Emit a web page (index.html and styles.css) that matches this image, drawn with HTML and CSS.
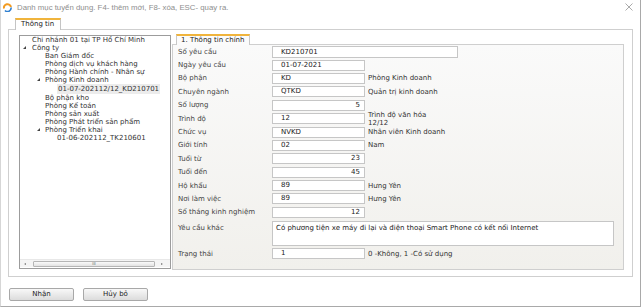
FILE: index.html
```html
<!DOCTYPE html>
<html lang="vi">
<head>
<meta charset="utf-8">
<title>Danh mục tuyển dụng</title>
<link rel="stylesheet" href="styles.css">
</head>
<body>
<div class="window">
  <div class="titlebar">
    <svg class="app-icon" width="9" height="9" viewBox="0 0 9 9">
      <path d="M1 5.5 A3.5 3.5 0 0 1 8 4" fill="none" stroke="#f29a1f" stroke-width="2"/>
      <path d="M8 4.5 A3.5 3.5 0 0 1 2 7.5" fill="none" stroke="#2f7fd0" stroke-width="1.6"/>
    </svg>
    <span class="title">Danh mục tuyển dụng. F4- thêm mới, F8- xóa, ESC- quay ra.</span>
    <svg class="close" width="8" height="8" viewBox="0 0 8 8">
      <path d="M0.5 0.5 L7.5 7.5 M7.5 0.5 L0.5 7.5" stroke="#a0a0a0" stroke-width="0.9"/>
    </svg>
  </div>
  <div class="content">
    <div class="tabs"><div class="tab">Thông tin</div></div>
    <div class="panel">
      <div class="tree">
        <ul class="tree-list">
          <li class="node l0">Chi nhánh 01 tại TP Hồ Chí Minh</li>
          <li class="node l0 open"><span class="arrow"></span>Công ty</li>
          <li class="node l1">Ban Giám đốc</li>
          <li class="node l1">Phòng dịch vụ khách hàng</li>
          <li class="node l1">Phòng Hành chính - Nhân sự</li>
          <li class="node l1 open"><span class="arrow"></span>Phòng Kinh doanh</li>
          <li class="node l2 selected"><span class="sel">01-07-202112/12_KD210701</span></li>
          <li class="node l1">Bộ phận kho</li>
          <li class="node l1">Phòng Kế toán</li>
          <li class="node l1">Phòng sản xuất</li>
          <li class="node l1">Phòng Phát triển sản phẩm</li>
          <li class="node l1 open"><span class="arrow"></span>Phòng Triển khai</li>
          <li class="node l2">01-06-202112_TK210601</li>
        </ul>
        <div class="hscroll">
          <span class="sarrow left"></span>
          <div class="thumb"><span class="grip">III</span></div>
          <span class="sarrow right"></span>
        </div>
      </div>
      <div class="form-area">
        <div class="subtabs"><div class="subtab">1. Thông tin chính</div></div>
        <div class="form">
          <div class="row"><span class="label">Số yêu cầu</span><span class="field wide">KD210701</span></div>
          <div class="row"><span class="label">Ngày yêu cầu</span><span class="field">01-07-2021</span></div>
          <div class="row"><span class="label">Bộ phận</span><span class="field">KD</span><span class="note">Phòng Kinh doanh</span></div>
          <div class="row"><span class="label">Chuyên ngành</span><span class="field">QTKD</span><span class="note">Quản trị kinh doanh</span></div>
          <div class="row"><span class="label">Số lượng</span><span class="field num">5</span></div>
          <div class="row"><span class="label">Trình độ</span><span class="field">12</span><span class="note two">Trình độ văn hóa<br>12/12</span></div>
          <div class="row"><span class="label">Chức vụ</span><span class="field">NVKD</span><span class="note">Nhân viên Kinh doanh</span></div>
          <div class="row"><span class="label">Giới tính</span><span class="field">02</span><span class="note">Nam</span></div>
          <div class="row"><span class="label">Tuổi từ</span><span class="field num">23</span></div>
          <div class="row"><span class="label">Tuổi đến</span><span class="field num">45</span></div>
          <div class="row"><span class="label">Hộ khẩu</span><span class="field">89</span><span class="note">Hưng Yên</span></div>
          <div class="row"><span class="label">Nơi làm việc</span><span class="field">89</span><span class="note">Hưng Yên</span></div>
          <div class="row"><span class="label">Số tháng kinh nghiệm</span><span class="field num">12</span></div>
          <div class="row tall"><span class="label">Yêu cầu khác</span><span class="area">Có phương tiện xe máy đi lại và điện thoại Smart Phone có kết nối Internet</span></div>
          <div class="row status"><span class="label">Trạng thái</span><span class="field">1</span><span class="note">0 -Không, 1 -Có sử dụng</span></div>
        </div>
      </div>
    </div>
    <div class="buttons">
      <button class="btn">Nhận</button>
      <button class="btn">Hủy bỏ</button>
    </div>
  </div>
</div>
</body>
</html>
```

FILE: styles.css
```css
* { box-sizing: border-box; }
html, body { margin: 0; padding: 0; background: #ffffff; }
body {
  width: 642px;
  height: 307px;
  overflow: hidden;
  font-family: "DejaVu Sans", Verdana, sans-serif;
  font-size: 7px;
  color: #333;
}
.window {
  width: 641px;
  height: 307px;
  background: #fff;
  border-right: 1px solid #a9a9a9;
  border-bottom: 1px solid #a9a9a9;
  border-left: 1px solid #d6d6d6;
  display: flex;
  flex-direction: column;
}
.titlebar {
  height: 16px;
  display: flex;
  align-items: center;
  padding: 0 7px 2px 2px;
}
.app-icon { flex: none; margin-right: 5px; }
.title {
  font-family: "Liberation Sans", Arial, sans-serif;
  font-size: 7.8px;
  color: #8e8e8e;
  flex: 1;
}
.close { flex: none; }
.content {
  padding: 2px 0 0 7px;
  display: flex;
  flex-direction: column;
}
.tabs { display: flex; padding-left: 7px; position: relative; z-index: 1; }
.tab {
  height: 12px;
  padding: 0 6px 0 5px;
  border: 1px solid #c4c4c4;
  border-top: 2px solid #f0b43c;
  border-bottom: none;
  background: #fff;
  line-height: 9px;
  margin-bottom: -1px;
  color: #222;
}
.panel {
  width: 625px;
  height: 248px;
  border: 1px solid #cfcfcf;
  padding: 4px 8px 6px 10px;
  display: flex;
  gap: 1px;
}
.tree {
  width: 152px;
  height: 234px;
  margin-top: 1px;
  border: 1px solid #9c9c9c;
  background: #fff;
  display: flex;
  flex-direction: column;
}
.tree-list {
  list-style: none;
  margin: 0;
  padding: 0;
  flex: 1;
}
.node {
  height: 8px;
  line-height: 8px;
  white-space: nowrap;
  position: relative;
  color: #333;
}
.l0 { padding-left: 12px; margin-top: 0; }
.tree-list .node:first-child { margin-top: 0; }
.l1 { padding-left: 25px; }
.l2 { padding-left: 37px; }
.arrow {
  position: absolute;
  top: 2px;
  width: 0; height: 0;
  border-left: 3.5px solid transparent;
  border-bottom: 3.5px solid #444;
}
.l0 .arrow { left: 3px; }
.l1 .arrow { left: 17px; }
.selected { height: 10px; line-height: 10px; padding-top: 0; }
.sel {
  display: inline-block;
  background: #ececec;
  padding: 0 1px;
  line-height: 10px;
  height: 10px;
}
.hscroll {
  height: 8px;
  margin: 0 0 1px 0;
  display: flex;
  align-items: center;
  padding: 0 3px 0 4px;
  background: #f4f4f4;
  border-top: 1px solid #e8e8e8;
}
.sarrow {
  width: 0; height: 0;
  border-top: 1.5px solid transparent;
  border-bottom: 1.5px solid transparent;
}
.sarrow.left { border-right: 2px solid #777; margin-right: 7px; }
.sarrow.right { border-left: 2px solid #777; margin-left: 6px; }
.thumb {
  width: 122px;
  height: 6px;
  border: 1px solid #b5b5b5;
  border-radius: 1px;
  background: linear-gradient(#fafafa, #e2e2e2);
  display: flex;
  align-items: center;
  justify-content: center;
}
.grip { font-size: 4px; letter-spacing: 0; color: #666; line-height: 4px; }
.form-area {
  width: 452px;
  display: flex;
  flex-direction: column;
}
.subtabs { display: flex; padding-left: 4px; position: relative; z-index: 1; }
.subtab {
  height: 11px;
  padding: 0 5px 0 4px;
  border: 1px solid #c8c8c8;
  border-top: 2px solid #f0b43c;
  border-bottom: none;
  background: #fbfbfb;
  line-height: 8px;
  margin-bottom: -1px;
  color: #222;
}
.form {
  height: 226px;
  border: 1px solid #cfcfcf;
  background: linear-gradient(#fafafa, #f1f0ec);
  padding: 0 0 0 5px;
}
.row {
  height: 13.4px;
  display: flex;
  align-items: center;
}
.label { width: 94px; flex: none; color: #444; }
.field {
  width: 93px;
  height: 11px;
  flex: none;
  background: #fff;
  border: 1px solid #c6c6c6;
  padding: 0 4px 0 8px;
  line-height: 9px;
  color: #222;
}
.field.wide { width: 186px; height: 12px; line-height: 10px; }
.field.num { text-align: right; }
.note { margin-left: 3px; color: #333; }
.note.two { line-height: 8px; }
.row.tall {
  height: 28px;
  align-items: flex-start;
  padding-top: 2px;
}
.row.tall .label { padding-top: 3px; }
.area {
  width: 342px;
  height: 25px;
  background: #fff;
  border: 1px solid #c6c6c6;
  padding: 2px 3px;
  color: #222;
  line-height: 9px;
}
.row.status { margin-top: 0; }
.buttons {
  display: flex;
  gap: 9px;
  margin-top: 11px;
  padding-left: 1px;
}
.btn {
  width: 65px;
  height: 13px;
  border: 1px solid #a8a8a8;
  border-radius: 2px;
  background: linear-gradient(#f8f8f8, #dcdcdc);
  font-family: "DejaVu Sans", Verdana, sans-serif;
  font-size: 7px;
  color: #222;
  padding: 0;
  line-height: 11px;
}
```
